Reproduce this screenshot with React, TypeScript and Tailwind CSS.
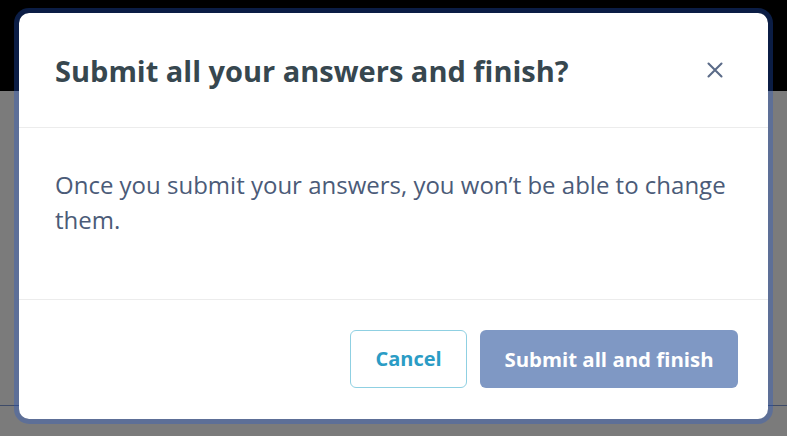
import React from "react";

function CloseIcon() {
  return (
    <svg width="16" height="16" viewBox="0 0 16 16" fill="none" aria-hidden="true">
      <path d="M1.5 1.5L14.5 14.5M14.5 1.5L1.5 14.5" stroke="#5b6b88" strokeWidth="2.1" strokeLinecap="round" />
    </svg>
  );
}

export default function App() {
  return (
    <div
      className="relative h-[436px] w-full overflow-hidden"
      style={{ fontFamily: '"Open Sans", "Noto Sans", sans-serif' }}
    >
      {/* page behind the dialog, dimmed */}
      <div className="flex h-full flex-col">
        <div className="h-[91px] bg-black" />
        <div className="h-[314px] bg-[#7b7b7b]" />
        <div className="h-px bg-[#3e4b68]" />
        <div className="flex-1 bg-[#7b7b7b]" />
      </div>

      {/* dialog */}
      <div className="absolute inset-0 flex justify-center pt-[8px]">
        <div className="h-[416px] w-[759px] rounded-[15px] border-[5px] border-[rgba(33,88,209,0.33)] bg-white bg-clip-padding">
          <div className="flex h-[115px] items-center justify-between border-b border-[#ececec] pl-[36px] pr-[41px]">
            <h2 className="text-[29px] font-bold leading-none text-[#37474f]">
              Submit all your answers and finish?
            </h2>
            <button className="flex h-6 w-6 items-center justify-center">
              <CloseIcon />
            </button>
          </div>
          <div className="h-[172px] border-b border-[#ececec] pl-[36px] pr-[24px] pt-[39px]">
            <p className="text-[24px] leading-[35px] text-[#4b5b78]">
              Once you submit your answers, you won’t be able to change them.
            </p>
          </div>
          <div className="flex items-start justify-end gap-[13px] pr-[30px] pt-[30px]">
            <button className="flex h-[58px] w-[117px] items-center justify-center rounded-[6px] border border-[#8fd0e2] bg-white text-[20px] font-bold text-[#2b9cc5]">
              Cancel
            </button>
            <button className="flex h-[58px] w-[258px] items-center justify-center rounded-[6px] bg-[#7f98c4] text-[20.4px] font-bold text-white">
              Submit all and finish
            </button>
          </div>
        </div>
      </div>
    </div>
  );
}
